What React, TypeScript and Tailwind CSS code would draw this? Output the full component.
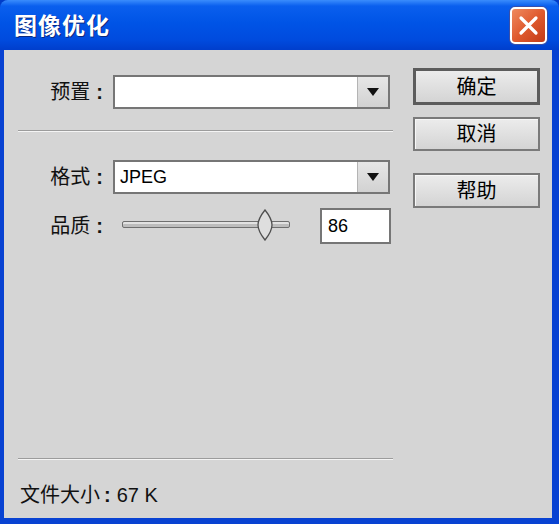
import React from "react";

const cjk = "font-['Liberation_Sans','Noto_Sans_CJK_SC',sans-serif]";

function Select({ value }: { value?: string }) {
  return (
    <div className="flex h-[34px] w-[277px] border-2 border-[#767676] bg-white">
      <div className="flex flex-1 items-center pl-[5px] text-[18px] text-black">
        {value}
      </div>
      <div className="flex w-[31px] items-center justify-center border-l border-[#b4b4b4] bg-gradient-to-b from-[#e6e6e6] to-[#d2d2d2]">
        <svg width="12" height="8" viewBox="0 0 12 8">
          <path d="M0 0 H12 L6 8 Z" fill="#111" />
        </svg>
      </div>
    </div>
  );
}

function Button({
  label,
  h,
  primary,
}: {
  label: string;
  h: string;
  primary?: boolean;
}) {
  return (
    <button
      className={
        "flex w-[127px] items-center justify-center bg-gradient-to-b from-[#ececec] to-[#d4d4d4] text-[20px] text-black " +
        h +
        (primary
          ? " border-[3px] border-[#5c5c5c]"
          : " border-2 border-[#7a7a7a] shadow-[inset_1px_1px_0_#f7f7f7]")
      }
    >
      {label}
    </button>
  );
}

function Label({ text }: { text: string }) {
  return (
    <div className="flex w-[95px] justify-end pr-[10px] text-[20px] leading-none text-[#111]">
      {text}
      <span className="ml-[6px] font-bold">:</span>
    </div>
  );
}

function Slider() {
  return (
    <div className="relative ml-[9px] h-[36px] w-[168px]">
      <div className="absolute left-0 right-0 top-[13px] h-[7px] rounded-[2px] border border-[#6f6f6f] bg-[#bdbdbd] shadow-[inset_0_2px_0_#e2e2e2]" />
      <svg
        className="absolute left-[135px] top-[1px]"
        width="16"
        height="32"
        viewBox="0 0 16 32"
      >
        <path
          d="M8 1 C12 6 15 10 15 16 C15 22 12 26 8 31 C4 26 1 22 1 16 C1 10 4 6 8 1 Z"
          fill="#dedede"
          stroke="#4f4f4f"
          strokeWidth="1.3"
        />
      </svg>
    </div>
  );
}

export default function App() {
  return (
    <div className={"flex h-[524px] w-[559px] flex-col bg-[#003cc8] " + cjk}>
      <div className="flex h-[50px] items-center justify-between rounded-t-[8px] bg-[linear-gradient(to_bottom,#3a8cfc_0%,#0a5fee_12%,#0054e6_45%,#004bde_80%,#003ecc_100%)] pl-[14px] pr-[12px]">
        <span className="pt-[2px] text-[23px] font-bold tracking-[1px] text-white [text-shadow:1px_1px_0_#0a2a80]">
          图像优化
        </span>
        <div className="flex h-[37px] w-[37px] items-center justify-center rounded-[5px] border-2 border-white bg-gradient-to-br from-[#ef8a5e] via-[#df5a2e] to-[#c23a17] shadow-[0_0_0_1px_#3a4fa8]">
          <svg width="21" height="21" viewBox="0 0 21 21">
            <path
              d="M3 3 L18 18 M18 3 L3 18"
              stroke="#fff"
              strokeWidth="3.2"
              strokeLinecap="round"
            />
          </svg>
        </div>
      </div>
      <div className="flex flex-1 border-b-[6px] border-l-4 border-r-[7px] border-[#0842d2] bg-[#d5d5d5]">
        <div className="flex w-[389px] flex-col pl-[14px]">
          <div className="mt-[25px] flex h-[34px] items-center">
            <Label text="预置" />
            <Select />
          </div>
          <div className="mt-[21px] h-[2px] w-[375px] border-t border-b border-t-[#9c9c9c] border-b-[#f4f4f4]" />
          <div className="mt-[28px] flex h-[34px] items-center">
            <Label text="格式" />
            <Select value="JPEG" />
          </div>
          <div className="mt-[14px] flex h-[36px] items-center">
            <Label text="品质" />
            <Slider />
            <div className="ml-[30px] flex h-[36px] w-[71px] items-center border-2 border-[#767676] bg-white pl-[6px] text-[18px] text-black">
              86
            </div>
          </div>
          <div className="flex-1" />
          <div className="h-[2px] w-[375px] border-t border-b border-t-[#9c9c9c] border-b-[#f4f4f4]" />
          <div className="mb-[11px] ml-[2px] mt-[23px] h-[24px] text-[20px] leading-[24px] text-[#111]">
            文件大小<span className="ml-[4px] mr-[6px] font-bold">:</span>67 K
          </div>
        </div>
        <div className="ml-[20px] flex flex-col">
          <div className="mt-[18px]">
            <Button label="确定" h="h-[37px]" primary />
          </div>
          <div className="mt-[12px]">
            <Button label="取消" h="h-[34px]" />
          </div>
          <div className="mt-[22px]">
            <Button label="帮助" h="h-[35px]" />
          </div>
        </div>
      </div>
    </div>
  );
}
